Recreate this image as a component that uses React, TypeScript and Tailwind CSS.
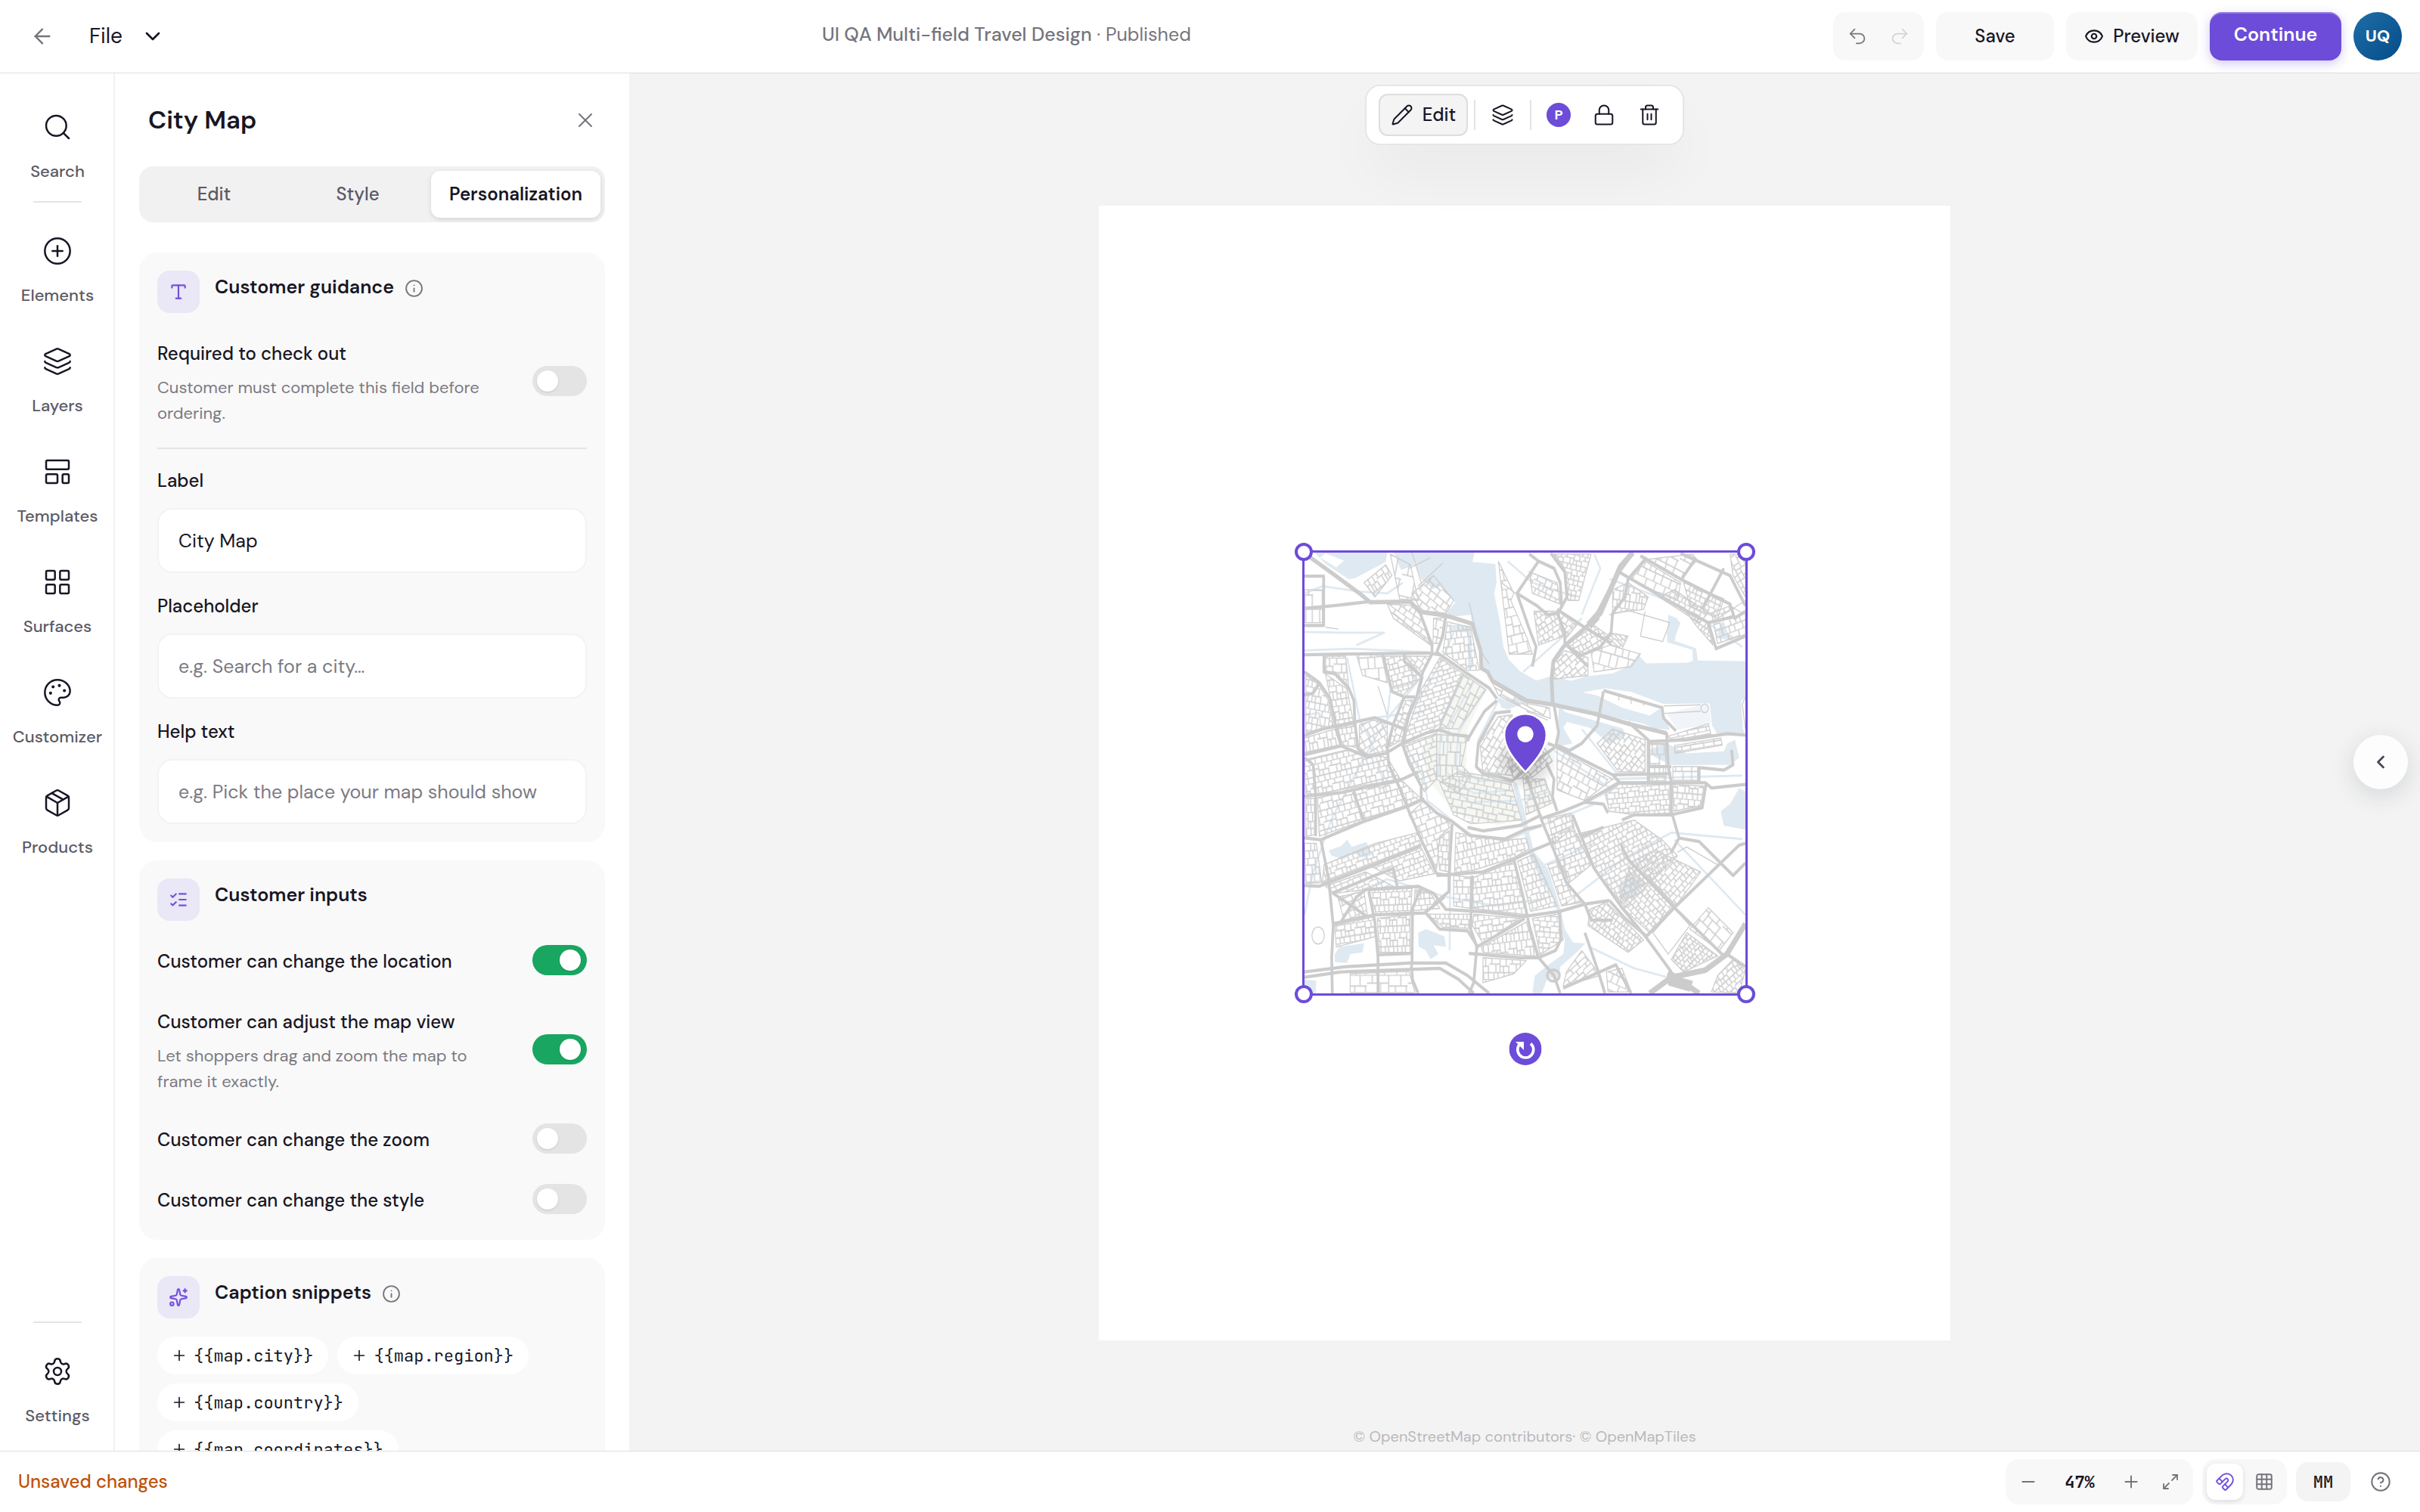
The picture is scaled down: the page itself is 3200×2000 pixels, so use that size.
import { useState } from 'react';
import {
  ArrowLeft,
  ChevronDown,
  ChevronLeft,
  CircleHelp,
  CirclePlus,
  Eye,
  Grid3x3,
  Info,
  Layers,
  LayoutGrid,
  ListChecks,
  Lock,
  Magnet,
  Maximize2,
  Minus,
  Package,
  Palette,
  Pencil,
  Plus,
  Redo2,
  Search,
  Settings,
  Sparkles,
  Trash2,
  Type,
  Undo2,
  X,
  type LucideIcon,
} from 'lucide-react';

interface NavEntry {
  label: string;
  icon: LucideIcon | typeof TemplatesIcon;
}

function TemplatesIcon({ size = 24, strokeWidth = 2 }: { size?: number; strokeWidth?: number }) {
  return (
    <svg
      width={size}
      height={size}
      viewBox="0 0 24 24"
      fill="none"
      stroke="currentColor"
      strokeWidth={strokeWidth}
      strokeLinejoin="round"
    >
      <rect x="3" y="3" width="18" height="7" rx="1" />
      <rect x="3" y="14" width="9" height="7" rx="1" />
      <rect x="16" y="14" width="5" height="7" rx="1" />
    </svg>
  );
}

const NAV: NavEntry[] = [
  { label: 'Elements', icon: CirclePlus },
  { label: 'Layers', icon: Layers },
  { label: 'Templates', icon: TemplatesIcon },
  { label: 'Surfaces', icon: LayoutGrid },
  { label: 'Customizer', icon: Palette },
  { label: 'Products', icon: Package },
];

const SNIPPETS = ['map.city', 'map.region', 'map.country', 'map.coordinates'];

/* ---------- map artwork ---------- */

const WATER = [
  '95,66 330,66 325,92 225,138 205,140 130,98',
  '352,66 412,66 418,100 375,115 362,90',
  '410,66 612,66 606,92 680,98 684,150 676,180 695,262 706,330 724,366 760,398 812,424 860,412 925,425 975,412 1060,404 1112,384 1142,352 1170,376 1305,374 1320,368 1318,338 1240,318 1235,290 1262,250 1280,262 1258,312 1330,334 1336,368 1490,370 1490,470 1476,482 1482,560 1490,575 1400,576 1382,550 1374,488 1226,490 1120,456 1036,446 962,457 1010,466 1090,500 1180,522 1218,500 1245,562 1160,556 1096,540 1000,518 888,498 780,482 700,442 660,412 655,392 634,388 632,340 605,265 600,240 530,246 524,232 550,205 500,160 478,168 440,140 425,110',
  '885,500 1000,522 1090,548 1100,580 1050,600 985,556 912,540 900,556 930,600 880,610',
  '1170,620 1235,600 1300,628 1420,622 1432,600 1456,590 1470,640 1440,660 1250,660 1200,640',
  '1490,735 1470,725 1440,770 1410,790 1420,830 1490,842',
  '140,900 180,888 200,870 215,890 262,876 282,912 250,920 215,904 190,925 150,915',
  '430,1130 455,1120 480,1128 515,1140 520,1170 480,1165 495,1190 470,1205 455,1180 432,1168',
  '1418,255 1432,290 1450,300 1448,312 1400,305 1402,280',
  '1075,1000 1120,960 1165,990 1130,1030 1090,1040',
  '62,1262 100,1264 98,1300 62,1300',
  '160,1190 175,1170 255,1160 250,1185 210,1190 200,1215 160,1212',
  '1240,240 1270,250 1262,312 1236,318',
  '535,268 600,270 606,390 592,392 590,290 535,286',
  '685,470 720,480 760,470 770,490 720,505 700,500',
];

const AMSTEL =
  '735,705 750,712 772,780 790,850 806,905 850,950 872,1010 890,1060 905,1120 932,1158 972,1160 950,1180 890,1226 888,1262 850,1255 830,1300 800,1300 808,1250 860,1215 900,1190 905,1150 888,1100 870,1040 820,970 790,910 770,840 752,770';

const CANALS = [
  'M200,360 240,530 280,600 150,810 90,960 62,1080',
  'M400,380 425,430 340,520 280,600 330,740',
  'M330,530 340,450 420,430',
  'M62,520 110,515 115,560 62,580',
  'M545,290 500,380 400,520 385,600 450,700 460,760 560,830 610,860',
  'M570,410 505,540 495,690 600,765 760,760 860,735',
  'M605,430 530,550 520,680 610,740 750,730',
  'M640,455 560,570 552,670 630,705 720,705',
  'M690,480 625,590 620,670 700,690',
  'M62,180 120,160 240,175 330,180 380,150',
  'M62,340 220,335 470,345',
  'M62,288 180,290 320,290 230,325',
  'M280,530 360,520 450,510',
  'M170,1040 330,980 520,1030 680,1055 840,1035',
  'M535,840 532,1180',
  'M905,1050 1100,920 1250,850 1480,868',
  'M1060,700 1480,690',
  'M960,240 1020,110 1000,70',
  'M720,90 800,150 940,190',
  'M770,400 900,300 960,250',
  'M1050,140 1240,200 1330,240 1480,330',
  'M1260,870 1490,1080',
  'M985,1170 1130,1230 1260,1260',
  'M870,620 1060,730 960,770',
  'M610,860 720,870 830,830 1000,770',
  'M840,940 1000,880',
  'M960,560 1080,690',
];

interface District {
  points: string;
  angle: number;
  w: number;
  h: number;
}

const DISTRICTS: District[] = [
  { points: '62,170 120,170 120,262 62,262', angle: 0, w: 30, h: 44 },
  { points: '255,150 325,100 345,130 290,190', angle: -35, w: 18, h: 22 },
  { points: '340,70 405,100 430,200 370,196', angle: 12, w: 44, h: 50 },
  { points: '410,180 480,130 545,200 520,236 440,228', angle: 36, w: 34, h: 20 },
  { points: '330,210 430,215 470,325 350,250', angle: 32, w: 34, h: 18 },
  { points: '480,250 518,248 500,320 478,320', angle: 12, w: 26, h: 24 },
  { points: '525,260 600,275 628,395 590,396 510,345', angle: -6, w: 24, h: 20 },
  { points: '130,356 195,356 205,440 160,400 130,398', angle: 0, w: 26, h: 20 },
  { points: '230,352 312,352 330,430 250,410', angle: -4, w: 36, h: 34 },
  { points: '320,356 385,356 440,415 380,466 348,455', angle: -14, w: 22, h: 16 },
  { points: '390,356 468,356 440,410', angle: 40, w: 22, h: 18 },
  { points: '66,410 108,436 140,480 155,550 66,570', angle: 10, w: 22, h: 20 },
  { points: '130,406 200,448 220,540 165,548 145,470', angle: -8, w: 22, h: 19 },
  { points: '62,585 160,560 178,604 62,628', angle: -10, w: 20, h: 24 },
  { points: '170,556 228,545 232,612 184,604', angle: -8, w: 20, h: 18 },
  { points: '240,548 285,535 330,545 330,620 265,632 240,610', angle: -30, w: 26, h: 20 },
  { points: '62,646 200,618 330,640 372,700 98,742 66,740', angle: -12, w: 24, h: 17 },
  { points: '66,754 96,754 96,856 66,860', angle: 0, w: 16, h: 22 },
  { points: '104,752 380,706 440,755 400,770 110,860', angle: -14, w: 26, h: 18 },
  { points: '380,480 420,478 378,590 336,610 350,550', angle: -68, w: 22, h: 16 },
  { points: '500,360 575,405 500,545 470,565 382,596 440,450', angle: -16, w: 28, h: 13 },
  { points: '575,405 650,450 610,500 560,560 498,556', angle: -62, w: 40, h: 20 },
  { points: '382,604 490,572 490,700 450,735 410,660', angle: -18, w: 28, h: 17 },
  { points: '490,575 590,580 570,660 600,690 560,740 490,700', angle: 2, w: 26, h: 32 },
  { points: '500,710 560,680 640,690 730,710 765,815 600,825 545,800', angle: 10, w: 34, h: 18 },
  { points: '770,700 840,700 868,765 780,800', angle: -14, w: 24, h: 16 },
  { points: '630,600 690,525 735,520 735,690 640,682', angle: -56, w: 34, h: 16 },
  { points: '720,650 830,600 865,650 800,695 740,700', angle: -40, w: 28, h: 14 },
  { points: '670,430 780,488 855,500 858,530 790,510 690,465', angle: 26, w: 50, h: 26 },
  { points: '880,615 1060,700 970,760 880,730', angle: 26, w: 32, h: 24 },
  { points: '1010,600 1060,560 1165,590 1165,680 1080,680', angle: -48, w: 24, h: 16 },
  { points: '1180,600 1232,600 1232,705 1180,705', angle: 0, w: 26, h: 30 },
  { points: '1240,580 1370,545 1378,575 1250,590', angle: -10, w: 44, h: 12 },
  { points: '1260,606 1410,585 1415,605 1262,628', angle: -8, w: 48, h: 12 },
  { points: '1255,665 1335,665 1335,705 1255,705', angle: 0, w: 40, h: 26 },
  { points: '1035,740 1080,715 1245,715 1245,795 1130,800 1050,790', angle: -4, w: 22, h: 14 },
  { points: '1255,715 1355,720 1345,775 1258,790', angle: 4, w: 22, h: 17 },
  { points: '940,855 1130,815 1220,870 1270,915 1100,1060 1000,950', angle: -24, w: 22, h: 15 },
  { points: '850,810 925,795 935,835 870,880', angle: -18, w: 24, h: 18 },
  { points: '850,860 930,830 990,940 920,990', angle: -18, w: 24, h: 17 },
  { points: '1120,930 1260,1050 1180,1130 1080,1050', angle: 42, w: 22, h: 15 },
  { points: '1200,900 1345,960 1265,1055 1130,930', angle: -44, w: 24, h: 15 },
  { points: '552,850 700,872 780,866 790,895 740,920 610,955 548,962', angle: -12, w: 20, h: 20 },
  { points: '610,975 740,932 775,1040 785,1080 605,1062', angle: -6, w: 22, h: 18 },
  { points: '752,930 805,910 880,1055 795,1070', angle: -16, w: 20, h: 18 },
  { points: '850,940 900,925 920,1000 960,1045 895,1055', angle: -16, w: 30, h: 18 },
  { points: '610,1078 760,1090 640,1160 606,1110', angle: -8, w: 26, h: 17 },
  { points: '635,1170 780,1100 815,1196 640,1185', angle: -6, w: 18, h: 24 },
  { points: '800,1090 885,1078 900,1150 825,1192', angle: 4, w: 26, h: 15 },
  { points: '125,940 290,880 430,850 445,880 290,935 120,992', angle: -18, w: 24, h: 15 },
  { points: '400,800 450,760 540,830 500,860 490,950', angle: -18, w: 30, h: 20 },
  { points: '280,945 440,892 482,965 370,985', angle: -18, w: 24, h: 15 },
  { points: '130,1000 260,960 350,1000 160,1020', angle: -20, w: 28, h: 14 },
  { points: '170,1030 255,1015 265,1080 190,1095', angle: -24, w: 30, h: 20 },
  { points: '270,1012 410,1006 406,1072 295,1080', angle: -2, w: 20, h: 18 },
  { points: '420,1010 470,1020 500,1062 416,1068', angle: -4, w: 22, h: 18 },
  { points: '160,1110 285,1086 295,1140 165,1170', angle: -8, w: 22, h: 17 },
  { points: '298,1090 404,1080 404,1185 304,1185', angle: -2, w: 18, h: 19 },
  { points: '460,1078 600,1078 596,1118 510,1114', angle: 2, w: 20, h: 17 },
  { points: '545,970 600,975 598,1062 545,1055', angle: 0, w: 24, h: 20 },
  { points: '210,1245 400,1238 420,1298 210,1298', angle: 0, w: 44, h: 26 },
  { points: '640,1200 780,1208 740,1245 640,1270', angle: 0, w: 22, h: 20 },
  { points: '490,870 530,845 530,960 500,955', angle: 4, w: 20, h: 18 },
  { points: '62,880 100,880 118,990 66,992', angle: -4, w: 20, h: 22 },
  { points: '985,1065 1040,1045 1160,1150 1110,1185 980,1110', angle: 36, w: 18, h: 15 },
  { points: '1300,1130 1400,1195 1290,1240 1250,1205', angle: -42, w: 16, h: 13 },
  { points: '1310,1120 1370,1060 1450,1130 1405,1180', angle: 40, w: 40, h: 28 },
  { points: '1400,1250 1450,1205 1490,1235 1470,1298 1380,1296', angle: -38, w: 20, h: 15 },
  { points: '910,1240 960,1180 1020,1250 900,1280', angle: -38, w: 40, h: 14 },
  { points: '1040,1240 1090,1230 1120,1296 1045,1296', angle: 22, w: 34, h: 26 },
  { points: '690,90 740,180 730,200 785,310 800,350 725,350', angle: -12, w: 40, h: 26 },
  { points: '790,120 880,150 890,210 800,180', angle: 24, w: 24, h: 18 },
  { points: '805,230 880,230 900,300 820,325', angle: -30, w: 20, h: 16 },
  { points: '870,70 990,70 950,200 915,200 905,110', angle: 12, w: 20, h: 14 },
  { points: '885,230 950,262 905,310', angle: 36, w: 20, h: 16 },
  { points: '870,375 905,340 980,360 980,410 870,420', angle: -38, w: 28, h: 16 },
  { points: '910,325 1000,270 1050,300 1020,335 960,350', angle: -28, w: 22, h: 16 },
  { points: '1050,290 1110,300 1090,335 1045,320', angle: 40, w: 26, h: 9 },
  { points: '1060,170 1110,150 1175,190 1160,225 1060,235', angle: 8, w: 18, h: 22 },
  { points: '1120,140 1165,90 1280,150 1270,200 1200,175', angle: 22, w: 36, h: 26 },
  { points: '1210,190 1260,170 1370,235 1340,262', angle: 24, w: 18, h: 14 },
  { points: '1290,150 1420,195 1400,250 1310,215', angle: 22, w: 22, h: 15 },
  { points: '1300,235 1365,260 1385,325 1330,270', angle: 30, w: 16, h: 13 },
  { points: '1440,70 1490,70 1490,190 1450,130', angle: 60, w: 24, h: 18 },
  { points: '1380,235 1440,215 1490,240 1490,295 1400,320', angle: -18, w: 30, h: 20 },
  { points: '1170,85 1320,70 1330,90 1280,140', angle: 24, w: 40, h: 26 },
  { points: '990,345 1050,325 1150,350 1120,385 1000,400', angle: 14, w: 40, h: 40 },
];

const ROADS = [
  'M62,222 150,215 275,203',
  'M62,132 H124 V270 H62',
  'M62,352 200,350 460,347 500,352',
  'M435,232 475,325 475,350 445,400 425,470 400,520 378,600 400,655 440,720 440,755 490,795 545,822 598,858 710,868 780,840 830,830',
  'M520,242 510,300 490,345 590,405 660,445 685,475',
  'M125,355 V400 L160,405 205,445 222,480 225,540 235,615 265,638',
  'M62,400 110,430 145,475 160,540 180,607',
  'M62,465 90,460 110,430',
  'M62,578 120,560 290,528 385,560',
  'M62,632 180,607 265,638 325,628 378,600 460,570 500,562 540,575 590,580 592,594',
  'M315,352 345,455 385,470 420,470',
  'M385,350 V370 L443,415 430,460',
  'M385,470 350,545 330,610 335,660 370,725 400,790 440,870 490,965 530,970',
  'M62,640 90,660 98,745 98,860',
  'M62,748 180,738 380,700 430,680',
  'M62,865 115,870 250,820 400,775 450,755',
  'M220,735 255,818',
  'M115,870 140,980 155,1110 150,1200 152,1300',
  'M62,998 110,1000 290,940 440,885',
  'M150,1020 290,970 350,950 362,1000',
  'M180,1100 230,1030 260,1010 430,1000 480,1020 520,1065 650,1072 770,1085 890,1070 970,1050 1050,1040',
  'M155,1020 265,1085',
  'M480,1050 530,1015 530,970 540,825',
  'M490,970 640,960 740,925 800,900 870,875',
  'M410,1220 412,1060 440,1005',
  'M408,1220 412,1262 430,1300',
  'M270,1015 290,1100 300,1200 V1300',
  'M300,1192 410,1188',
  'M62,1240 200,1225 400,1215 520,1215 590,1250 660,1300',
  'M62,1255 180,1240 500,1230 560,1260 610,1300',
  'M605,970 600,1120 620,1170 610,1270 595,1300',
  'M620,1170 700,1130 775,1090',
  'M594,1188 760,1200 820,1200 875,1180 892,1150 888,1070',
  'M455,1075 500,1120 590,1125 620,1165',
  'M155,1105 290,1080 450,1075 515,1030',
  'M740,925 770,1030 790,1110 820,1200 870,1250 890,1300',
  'M780,690 830,815 870,900 910,990 970,1050 990,1095 H1060',
  'M830,810 900,790 970,765 1020,740 1080,710',
  'M590,835 640,845 760,830 830,800',
  'M845,655 870,700 865,750 880,790',
  'M1080,710 H1360 L1380,725 1490,715',
  'M1250,685 1060,688 880,610 850,600',
  'M1060,688 1085,712',
  'M870,492 885,570 875,610 810,650 735,705 700,695 640,685 618,665 625,600 680,515 730,510',
  'M685,480 645,510 610,560 590,590',
  'M750,180 820,90 870,110 890,150 895,215 885,235 850,240 815,215 750,180 790,280 812,330 800,385',
  'M790,70 820,90',
  'M860,68 905,120 912,190 890,225',
  'M1080,120 1200,180 1300,230 1370,262 1395,335 1490,300',
  'M1150,75 1280,140 1440,210 1455,250 1490,230',
  'M1170,80 1110,140 1100,190 1060,235 1055,290 1020,330 955,355 905,320',
  'M880,225 960,270 1055,320',
  'M880,235 905,290 905,320 980,385',
  'M1330,80 1280,145',
  'M1420,110 1350,225',
  'M1280,68 1440,130 1490,215',
  'M1370,262 1455,245',
  'M1110,540 1175,590 V710',
  'M1235,570 1240,665 1250,710 V790 L1275,865 1250,905',
  'M1175,595 1300,590 1430,573 1490,577',
  'M1175,665 H1250',
  'M1340,710 V668 L1420,675 1450,660 1445,618',
  'M1030,455 1010,550 960,600 920,620 880,605',
  'M1030,452 1220,500 1225,530 1265,565',
  'M930,800 1000,950 1090,1060 1170,1145 1250,1240',
  'M1085,880 1110,925 1260,1060 1420,1195',
  'M1275,865 1340,875 1450,970 1490,935',
  'M1490,880 1470,885 1260,1060 1170,1140',
  'M1490,1225 1430,1190',
  'M1090,815 1130,800 1250,800 1350,780 1362,716',
  'M970,765 1030,770 1045,795',
  'M960,860 1030,835',
  'M1050,1040 1100,1090 1170,1140',
  'M970,1130 1010,1230 1035,1300',
  'M900,1285 1070,1220 1120,1300',
];

const WIDE_ROADS = [
  'M62,68 130,110 240,180 275,205 405,203 435,232 520,242 605,265 632,340 635,390 655,400 670,425 780,480 870,492 1000,517 1110,545 1235,572',
  'M866,492 862,420 868,370 900,330 1000,255 1080,120 1125,66',
];

const MOTORWAYS = ['M985,265 1020,235 1085,105 1125,66', 'M1490,1105 1430,1190 1360,1235 1250,1255 1180,1300', 'M1240,1240 1340,1300'];

// irregular brick pattern used as the small streets of a district
function blockPath(w: number, h: number) {
  return [
    `M0,1 H${w * 3} M0,${h * 0.9} H${w * 1.6} M${w * 1.6},${h * 1.2} H${w * 3} M0,${h * 2.1} H${w * 3}`,
    `M${w * 0.4},1 V${h * 0.9} M${w * 1.6},1 V${h * 2.1} M${w * 2.5},1 V${h * 1.2}`,
    `M${w},${h * 0.9} V${h * 2.1} M${w * 2.1},${h * 1.2} V${h * 2.1} M${w * 2.9},${h * 1.2} V${h * 3}`,
    `M${w * 0.7},${h * 2.1} V${h * 3} M${w * 1.3},${h * 2.1} V${h * 3} M${w * 2.2},${h * 2.1} V${h * 3}`,
  ].join(' ');
}

function CityMap() {
  return (
    <svg className="block size-full" viewBox="62 66 1428 1234" preserveAspectRatio="none" role="img" aria-label="City map">
      <defs>
        {DISTRICTS.map(({ angle, w, h }, i) => (
          <pattern
            key={i}
            id={`streets-${i}`}
            width={w * 3}
            height={h * 3}
            patternUnits="userSpaceOnUse"
            patternTransform={`rotate(${angle})`}
          >
            <path d={blockPath(w, h)} fill="none" stroke="#cecece" strokeWidth="3.600" />
          </pattern>
        ))}
        <radialGradient id="pin-shade">
          <stop offset="0" stopColor="#000" stopOpacity="0.28" />
          <stop offset="1" stopColor="#000" stopOpacity="0" />
        </radialGradient>
      </defs>
      <rect x="59" y="63" width="1434" height="1240" fill="#fff" />
      <path
        d="M575,405 650,450 590,560 585,670 620,690 730,705 765,815 690,828 600,815 545,790 460,700 440,610 495,560Z M775,705 840,700 868,760 790,800Z"
        fill="#f5f7f2"
      />
      <path d="M1235,515 1370,488 1378,545 1270,562Z" fill="#f1f4f8" />
      <g fill="#dfe9f1">
        {WATER.map((points) => (
          <polygon key={points} points={points} />
        ))}
        <polygon points={AMSTEL} />
      </g>
      <path d="M1010,452 1218,492 1215,505 1030,470Z M890,496 1160,545 1230,572 1100,560 905,512Z M130,68 190,88 165,108 112,80Z" fill="#fff" />
      <g fill="none" stroke="#dfe9f1" strokeWidth="6" strokeLinejoin="round">
        {CANALS.map((d) => (
          <path key={d} d={d} />
        ))}
      </g>
      {DISTRICTS.map(({ points }, i) => (
        <polygon key={points} points={points} fill={`url(#streets-${i})`} stroke="#cecece" strokeWidth="3" />
      ))}
      <g fill="none" stroke="#cecece" strokeWidth="3">
        <path d="M430,160 510,95 M595,205 632,340 660,378 M410,66 440,150 M400,110 470,80 M1050,240 1110,228 1245,262 1222,315 1150,300 1165,230 M1225,495 1345,492 M1228,516 1345,510 M300,440 330,520 M130,275 172,280 M700,150 745,180 M1190,1130 1260,1062 1310,1110 1240,1190Z M1270,905 1300,890 1400,940 M1400,250 1490,200 M475,325 350,235 M1080,460 V480 M1120,468 V490 M1160,480 V495 M780,510 850,535 M1490,470 1480,490 1490,560" />
        <circle cx="1358" cy="502" r="12" />
        <ellipse cx="106" cy="1138" rx="20" ry="24" />
        <ellipse cx="868" cy="1250" rx="20" ry="16" strokeWidth="8" />
      </g>
      <g fill="none" stroke="#cccccc" strokeLinejoin="round">
        <g strokeWidth="9">
          {ROADS.map((d) => (
            <path key={d} d={d} />
          ))}
        </g>
        <g strokeWidth="12">
          {WIDE_ROADS.map((d) => (
            <path key={d} d={d} />
          ))}
        </g>
        <g strokeWidth="16">
          {MOTORWAYS.map((d) => (
            <path key={d} d={d} />
          ))}
        </g>
      </g>
      <path d="M975,262 1008,230 1018,252 990,278Z M1236,1245 1320,1265 1310,1295 1240,1278Z" fill="#cccccc" />
      <ellipse cx="776" cy="650" rx="105" ry="85" fill="url(#pin-shade)" />
    </svg>
  );
}

function MapPin() {
  return (
    <svg className="absolute bottom-1/2 left-1/2 -translate-x-1/2 overflow-visible" width="60" height="81" viewBox="0 0 58 77">
      <path
        d="M29 76C15 61 2 45 2 28.500a27 27 0 0 1 54 0C56 45 43 61 29 76Z"
        fill="#6c4ad5"
        stroke="#fff"
        strokeWidth="2.500"
        strokeLinejoin="round"
      />
      <circle cx="29" cy="27.500" r="10.300" fill="#fff" />
    </svg>
  );
}

/* ---------- panel pieces ---------- */

function NavButton({ label, icon: Icon }: NavEntry) {
  return (
    <button className="flex w-full flex-col items-center gap-5 py-5 text-[22px] leading-[38px] font-medium text-[#5b5a66]">
      <span className="text-[#181624]">
        <Icon size={40} strokeWidth={1.5} />
      </span>
      {label}
    </button>
  );
}

interface CardProps {
  title: string;
  icon: LucideIcon;
  info?: boolean;
  className: string;
  children: React.ReactNode;
}

function Card({ title, icon: Icon, info, className, children }: CardProps) {
  return (
    <section className={`shrink-0 rounded-3xl bg-[#f9f9f9] px-6 pt-6 ${className}`}>
      <div className="flex gap-5">
        <div className="flex size-14 items-center justify-center rounded-2xl bg-[#eae7f6] text-[#7351dc]">
          <Icon size={26} strokeWidth={2} />
        </div>
        <div className="flex h-11 items-center gap-3.5">
          <h2 className="text-[25px] font-semibold">{title}</h2>
          {info && (
            <button aria-label={`About ${title}`} className="pt-0.5 text-[#75747c]">
              <Info size={25} strokeWidth={1.8} />
            </button>
          )}
        </div>
      </div>
      {children}
    </section>
  );
}

interface ToggleRowProps {
  id: string;
  label: string;
  hint?: string;
  defaultChecked?: boolean;
}

function ToggleRow({ id, label, hint, defaultChecked }: ToggleRowProps) {
  return (
    <div className="flex items-center justify-between">
      <div className="-mb-1 w-[440px]">
        <label htmlFor={id} className="block text-2xl leading-[44px] font-medium whitespace-nowrap">
          {label}
        </label>
        {hint && <p className="mt-1.5 pb-0.5 text-[22px] leading-[34px] text-[#7b7a83]">{hint}</p>}
      </div>
      <input
        id={id}
        type="checkbox"
        role="switch"
        defaultChecked={defaultChecked}
        className="h-10 w-[72px] shrink-0 appearance-none rounded-full bg-[#e4e4e4] p-1.5 before:block before:size-7 before:rounded-full before:bg-white before:shadow-sm checked:bg-[#18a660] checked:before:translate-x-[30px]"
      />
    </div>
  );
}

interface FieldProps {
  id: string;
  label: string;
  placeholder?: string;
  defaultValue?: string;
}

function Field({ id, label, placeholder, defaultValue }: FieldProps) {
  return (
    <div>
      <label htmlFor={id} className="block text-2xl leading-8 font-medium">
        {label}
      </label>
      <input
        id={id}
        type="text"
        placeholder={placeholder}
        defaultValue={defaultValue}
        className="mt-5 block h-[86px] w-full rounded-[20px] border-2 border-[#f3f3f3] bg-white px-[26px] text-[25px] placeholder:text-[#7b7a83]"
      />
    </div>
  );
}

const TABS = ['Edit', 'Style', 'Personalization'];

function PropertiesPanel() {
  const [tab, setTab] = useState('Personalization');

  return (
    <aside className="flex w-[680px] shrink-0 flex-col overflow-hidden bg-white px-8">
      <div className="flex h-[123px] shrink-0 items-center justify-between pr-2.5 pl-3">
        <h1 className="text-[33px] font-semibold">City Map</h1>
        <button aria-label="Close panel" className="text-[#75747c]">
          <X size={32} strokeWidth={1.5} />
        </button>
      </div>

      <div role="tablist" className="flex shrink-0 gap-1 rounded-[18px] bg-[#f1f1f1] p-1.5">
        {TABS.map((name) => (
          <button
            key={name}
            role="tab"
            aria-selected={tab === name}
            onClick={() => setTab(name)}
            className={
              tab === name
                ? 'h-[62px] flex-1 rounded-xl bg-white px-6 text-2xl font-semibold shadow-[0_2px_6px_rgba(0,0,0,0.12)]'
                : 'h-[62px] flex-1 px-6 text-2xl font-medium text-[#5b5a66]'
            }
          >
            {name}
          </button>
        ))}
      </div>

      <div className="mt-10 flex min-h-0 flex-1 flex-col gap-6 overflow-hidden">
        <Card title="Customer guidance" icon={Type} info className="pb-6">
          <div className="mt-8">
            <ToggleRow id="required" label="Required to check out" hint="Customer must complete this field before ordering." />
          </div>
          <hr className="mt-[30px] border-t-2 border-[#e4e4e4]" />
          <div className="mt-[26px] flex flex-col gap-7">
            <Field id="field-label" label="Label" defaultValue="City Map" />
            <Field id="field-placeholder" label="Placeholder" placeholder="e.g. Search for a city…" />
            <Field id="field-help" label="Help text" placeholder="e.g. Pick the place your map should show" />
          </div>
        </Card>

        <Card title="Customer inputs" icon={ListChecks} className="pb-[34px]">
          <div className="mt-8 flex flex-col gap-10">
            <ToggleRow id="can-location" label="Customer can change the location" defaultChecked />
            <ToggleRow
              id="can-view"
              label="Customer can adjust the map view"
              hint="Let shoppers drag and zoom the map to frame it exactly."
              defaultChecked
            />
            <ToggleRow id="can-zoom" label="Customer can change the zoom" />
            <ToggleRow id="can-style" label="Customer can change the style" />
          </div>
        </Card>

        <Card title="Caption snippets" icon={Sparkles} info className="pb-6">
          <div className="mt-6 flex flex-wrap gap-3">
            {SNIPPETS.map((name) => (
              <button
                key={name}
                className="flex h-[50px] items-center gap-2 rounded-full bg-white pr-5 pl-[18px] font-['JetBrains_Mono','DejaVu_Sans_Mono',monospace] text-[22px]"
              >
                <Plus size={22} strokeWidth={1.8} />
                {`{{${name}}}`}
              </button>
            ))}
          </div>
        </Card>
      </div>
    </aside>
  );
}

/* ---------- page ---------- */

function TopBar() {
  return (
    <header className="flex h-[97px] shrink-0 items-center justify-between border-b border-[#dedede] bg-white pr-6 pl-10">
      <div className="flex items-center">
        <button aria-label="Back" className="text-[#75747c]">
          <ArrowLeft size={32} strokeWidth={1.8} />
        </button>
        <button className="ml-[46px] flex items-center gap-6 pr-5 text-[28px]">
          File
          <ChevronDown size={32} strokeWidth={2} />
        </button>
      </div>
      <p className="pb-1 text-[25px] text-[#75747c]">
        <span className="font-medium">UI QA Multi-field Travel Design</span> · Published
      </p>
      <div className="flex items-center justify-end gap-4 text-2xl font-medium">
        <div className="flex h-16 items-center rounded-2xl bg-[#f8f8f8] px-1">
          <button aria-label="Undo" className="flex size-14 items-center justify-center text-[#75747c]">
            <Undo2 size={28} strokeWidth={1.5} />
          </button>
          <button aria-label="Redo" disabled className="flex size-14 items-center justify-center text-[#d3d3d6]">
            <Redo2 size={28} strokeWidth={1.5} />
          </button>
        </div>
        <button className="h-16 w-[156px] rounded-2xl bg-[#f8f8f8]">Save</button>
        <button className="flex h-16 w-[174px] items-center justify-center gap-3 rounded-2xl bg-[#f8f8f8]">
          <Eye size={26} strokeWidth={2} />
          Preview
        </button>
        <button className="h-16 w-[174px] rounded-2xl bg-[#6c4cd8] pb-1 text-[25px] font-semibold text-white shadow-[inset_0_2px_0_rgba(255,255,255,0.25),0_4px_14px_rgba(108,76,216,0.3)]">
          Continue
        </button>
        <button className="size-16 rounded-full bg-linear-to-br from-[#1e6ea8] to-[#044c88] text-[22px] font-bold text-white">UQ</button>
      </div>
    </header>
  );
}

function SelectionToolbar() {
  return (
    <div className="flex h-20 items-center gap-1 rounded-[20px] border-2 border-[#e6e6e6] bg-white px-4 shadow-[0_40px_80px_-10px_rgba(0,0,0,0.05)]">
      <button className="flex h-14 w-[118px] items-center justify-center gap-3 rounded-xl border-2 border-[#dddddd] bg-[#f4f4f4] text-2xl font-medium">
        <Pencil size={30} strokeWidth={1.6} />
        Edit
      </button>
      <span className="mx-1 h-10 w-0.5 bg-[#e4e4e4]" />
      <button aria-label="Arrange" className="flex size-14 items-center justify-center">
        <Layers size={30} strokeWidth={1.6} />
      </button>
      <span className="mx-1 h-10 w-0.5 bg-[#e4e4e4]" />
      <button aria-label="Personalize" className="flex size-14 items-center justify-center">
        <span className="flex size-8 items-center justify-center rounded-full bg-[#6c4cd8] text-lg font-bold text-white">P</span>
      </button>
      <button aria-label="Lock" className="flex size-14 items-center justify-center">
        <Lock size={30} strokeWidth={1.6} />
      </button>
      <button aria-label="Delete" className="flex size-14 items-center justify-center">
        <Trash2 size={30} strokeWidth={1.6} />
      </button>
    </div>
  );
}

function Canvas() {
  return (
    <main className="relative flex min-w-0 flex-1 flex-col items-center bg-[#f3f3f3]">
      <div className="absolute top-[15px] z-10">
        <SelectionToolbar />
      </div>

      <div className="relative mt-[175px] h-[1501px] w-[1126px] shrink-0 bg-white">
        <div className="absolute top-[456px] left-[269px] size-[589px] border-[3px] border-[#6c4cd8]">
          <CityMap />
          <MapPin />
          <span className="absolute -top-[13px] -left-[13px] size-6 rounded-full border-4 border-[#6c4cd8] bg-white" />
          <span className="absolute -top-[13px] -right-[13px] size-6 rounded-full border-4 border-[#6c4cd8] bg-white" />
          <span className="absolute -bottom-[13px] -left-[13px] size-6 rounded-full border-4 border-[#6c4cd8] bg-white" />
          <span className="absolute -right-[13px] -bottom-[13px] size-6 rounded-full border-4 border-[#6c4cd8] bg-white" />
          <button aria-label="Rotate" className="absolute top-full left-1/2 mt-[52px] -translate-x-1/2">
            <svg width="43" height="43" viewBox="0 0 43 43" fill="none">
              <circle cx="21.500" cy="21.500" r="21.500" fill="#6c4cd8" />
              <path d="M28.500 14.500a10.500 10.500 0 1 1-13.500 0" stroke="#fff" strokeWidth="3.600" />
              <path d="M8.500 12h11v11z" fill="#fff" />
            </svg>
          </button>
        </div>
      </div>

      <p className="mt-auto pb-1 text-xl leading-[30px] text-[#b9b9bc]">© OpenStreetMap contributors· © OpenMapTiles</p>

      <button
        aria-label="Open side panel"
        className="absolute top-1/2 right-4 flex size-[72px] -translate-y-1/2 items-center justify-center rounded-full bg-[#fdfdfd] text-[#4a4858] shadow-[0_8px_32px_rgba(30,40,60,0.14)]"
      >
        <ChevronLeft size={28} strokeWidth={2.4} />
      </button>
    </main>
  );
}

function StatusBar() {
  return (
    <footer className="flex h-[81px] shrink-0 items-center justify-between border-t border-[#dedede] bg-white px-6">
      <p className="text-2xl font-medium text-[#c05208]">Unsaved changes</p>
      <div className="flex items-center gap-3 font-['JetBrains_Mono','DejaVu_Sans_Mono',monospace] text-[22px] font-semibold text-[#181624]">
        <div className="flex h-[60px] items-center gap-1 rounded-[18px] bg-[#f8f8f8] px-1.5 text-[#75747c]">
          <button aria-label="Zoom out" className="flex size-12 items-center justify-center">
            <Minus size={26} strokeWidth={1.8} />
          </button>
          <span className="w-20 text-center text-[#181624]">47%</span>
          <button aria-label="Zoom in" className="flex size-12 items-center justify-center">
            <Plus size={26} strokeWidth={1.8} />
          </button>
          <button aria-label="Fit to screen" className="flex size-12 items-center justify-center">
            <Maximize2 size={24} strokeWidth={1.8} />
          </button>
        </div>
        <div className="flex h-[60px] items-center gap-1 rounded-[18px] bg-[#f8f8f8] px-1.5 text-[#75747c]">
          <button
            aria-label="Snap"
            aria-pressed="true"
            className="flex size-12 items-center justify-center rounded-xl bg-white text-[#7351dc] shadow-[0_2px_6px_rgba(0,0,0,0.12)]"
          >
            <Magnet size={26} strokeWidth={1.8} />
          </button>
          <button aria-label="Grid" className="flex size-12 items-center justify-center">
            <Grid3x3 size={26} strokeWidth={1.8} />
          </button>
        </div>
        <button className="h-[52px] w-[72px] rounded-2xl bg-[#f4f4f4] font-medium">MM</button>
        <button aria-label="Help" className="flex h-12 w-14 items-center justify-center text-[#75747c]">
          <CircleHelp size={28} strokeWidth={1.8} />
        </button>
      </div>
    </footer>
  );
}

export default function App() {
  return (
    <div className="flex h-screen flex-col overflow-hidden bg-white font-['DM_Sans',Inter,sans-serif] text-[#181624]">
      <TopBar />
      <div className="flex min-h-0 flex-1">
        <nav className="flex w-[152px] shrink-0 flex-col items-center bg-white pt-[31px] pb-[7px] shadow-[inset_-2px_0_0_#f1f1f1]">
          <NavButton label="Search" icon={Search} />
          <hr className="mb-6 w-16 border-t-2 border-[#e4e4e4]" />
          <div className="flex w-full flex-col gap-2">
            {NAV.map((entry) => (
              <NavButton key={entry.label} {...entry} />
            ))}
          </div>
          <hr className="mt-auto mb-6 w-16 border-t-2 border-[#e4e4e4]" />
          <NavButton label="Settings" icon={Settings} />
        </nav>
        <PropertiesPanel />
        <Canvas />
      </div>
      <StatusBar />
    </div>
  );
}
